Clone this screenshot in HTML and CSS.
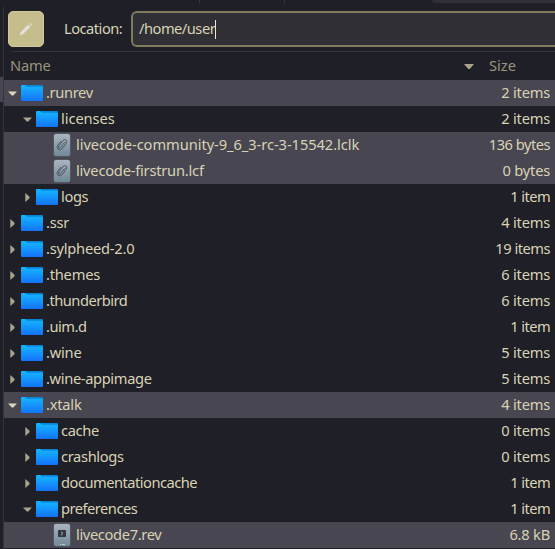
FILE: index.html
```
<!DOCTYPE html>
<html lang="en">
<head>
<meta charset="utf-8">
<title>Files</title>
<link rel="stylesheet" href="styles.css">
</head>
<body>
<svg class="defs" aria-hidden="true">
  <defs>
    <linearGradient id="blue" x1="0" y1="0" x2="0" y2="1"><stop offset="0" stop-color="#14b8ff"/><stop offset="1" stop-color="#1473fa"/></linearGradient>
    <linearGradient id="steel" x1="0" y1="0" x2="0" y2="1"><stop offset="0" stop-color="#aab4bf"/><stop offset="1" stop-color="#718998"/></linearGradient>
    <symbol id="folder" viewBox="0 0 22 16"><path d="M5 0H21.2Q22 0 22 1V8H0V1Z" fill="#0784d5"/><path d="M0 1Q0 0 1 0H4L6 1.8H21.2Q22 1.8 22 2.6V15Q22 16 21 16H1Q0 16 0 15Z" fill="url(#blue)"/></symbol>
    <symbol id="clip" viewBox="0 0 18 24"><rect x=".5" y=".5" width="17" height="23" rx="2.5" fill="#586875"/><rect x="1" y="1" width="16" height="22" rx="2" fill="url(#steel)"/><path d="M11.7 9.2L7.7 14.6Q6.8 15.6 5.9 15Q5 14.2 5.8 13L10 7.5Q11.4 5.9 13 7Q14.5 8.2 13.3 10L9.5 15.3Q7.5 17.8 5.1 16.3Q3.2 14.6 4.7 12.3L8 8" fill="none" stroke="#4b5863" stroke-width="1"/></symbol>
    <symbol id="rev" viewBox="0 0 18 24"><rect x=".5" y=".5" width="17" height="23" rx="2.5" fill="#586875"/><rect x="1" y="1" width="16" height="22" rx="2" fill="url(#steel)"/><rect x="5" y="7" width="8" height="7" rx=".7" fill="#303940"/><path d="M8 8.8L10 10.5L8 12.2" fill="none" stroke="#a8b5bf"/><path d="M7 21.5h1m1 0h3" stroke="#c1ccd3" stroke-width="1.2"/></symbol>
    <symbol id="open" viewBox="0 0 9 9"><path d="M0 2.5H9L5.2 6.5H3.8Z"/></symbol>
    <symbol id="closed" viewBox="0 0 9 9"><path d="M2.3 0L6.5 3.8V5.2L2.3 9Z"/></symbol>
  </defs>
</svg>
<div class="edge"><div class="edge-selection"></div></div>
<main class="window">
  <div class="tabs"><i></i><i></i><b></b></div>
  <div class="toolbar">
    <button class="edit" aria-label="Edit location"><svg width="14" height="14" viewBox="0 0 14 14"><path d="M1 13L1.5 10.3L9 2.8L11.2 5L3.7 12.5Z" fill="#e3e1dc"/><path d="M9.7 2.1L10.8 1Q11.4.5 12.2 1.2L12.8 1.8Q13.5 2.5 12.9 3.2L11.9 4.3Z" fill="#d8d1b4"/></svg></button>
    <span class="label tighter">Location:</span>
    <div class="location"><span class="tighter">/home/user</span><i class="caret"></i></div>
  </div>
  <div class="header"><span class="name snug">Name</span><svg class="sort" viewBox="0 0 10 5"><path d="M0 0H10L5.7 5H4.3Z"/></svg><span class="size">Size</span></div>
  <div class="list">
    <div class="row selected"><svg class="arrow"><use href="#open"/></svg><svg class="folder"><use href="#folder"/></svg><span class="name tight">.runrev</span><span class="size snug">2 items</span></div>
    <div class="row nested"><svg class="arrow"><use href="#open"/></svg><svg class="folder"><use href="#folder"/></svg><span class="name slight">licenses</span><span class="size snug">2 items</span></div>
    <div class="row selected file"><svg class="doc"><use href="#clip"/></svg><span class="name slight">livecode-community-9_6_3-rc-3-15542.lclk</span><span class="size tighter">136 bytes</span></div>
    <div class="row selected file"><svg class="doc"><use href="#clip"/></svg><span class="name snug">livecode-firstrun.lcf</span><span class="size snug">0 bytes</span></div>
    <div class="row nested"><svg class="arrow"><use href="#closed"/></svg><svg class="folder"><use href="#folder"/></svg><span class="name tight">logs</span><span class="size tightest">1 item</span></div>
    <div class="row"><svg class="arrow"><use href="#closed"/></svg><svg class="folder"><use href="#folder"/></svg><span class="name snug">.ssr</span><span class="size snug">4 items</span></div>
    <div class="row"><svg class="arrow"><use href="#closed"/></svg><svg class="folder"><use href="#folder"/></svg><span class="name snug">.sylpheed-2.0</span><span class="size tighter">19 items</span></div>
    <div class="row"><svg class="arrow"><use href="#closed"/></svg><svg class="folder"><use href="#folder"/></svg><span class="name snug">.themes</span><span class="size snug">6 items</span></div>
    <div class="row"><svg class="arrow"><use href="#closed"/></svg><svg class="folder"><use href="#folder"/></svg><span class="name tighter">.thunderbird</span><span class="size snug">6 items</span></div>
    <div class="row"><svg class="arrow"><use href="#closed"/></svg><svg class="folder"><use href="#folder"/></svg><span class="name tighter">.uim.d</span><span class="size tightest">1 item</span></div>
    <div class="row"><svg class="arrow"><use href="#closed"/></svg><svg class="folder"><use href="#folder"/></svg><span class="name snug">.wine</span><span class="size snug">5 items</span></div>
    <div class="row"><svg class="arrow"><use href="#closed"/></svg><svg class="folder"><use href="#folder"/></svg><span class="name tight">.wine-appimage</span><span class="size snug">5 items</span></div>
    <div class="row selected"><svg class="arrow"><use href="#open"/></svg><svg class="folder"><use href="#folder"/></svg><span class="name snug">.xtalk</span><span class="size snug">4 items</span></div>
    <div class="row nested"><svg class="arrow"><use href="#closed"/></svg><svg class="folder"><use href="#folder"/></svg><span class="name tight">cache</span><span class="size snug">0 items</span></div>
    <div class="row nested"><svg class="arrow"><use href="#closed"/></svg><svg class="folder"><use href="#folder"/></svg><span class="name tight">crashlogs</span><span class="size snug">0 items</span></div>
    <div class="row nested"><svg class="arrow"><use href="#closed"/></svg><svg class="folder"><use href="#folder"/></svg><span class="name tighter">documentationcache</span><span class="size tightest">1 item</span></div>
    <div class="row nested"><svg class="arrow"><use href="#open"/></svg><svg class="folder"><use href="#folder"/></svg><span class="name tighter">preferences</span><span class="size tightest">1 item</span></div>
    <div class="row selected file"><svg class="doc"><use href="#rev"/></svg><span class="name tight">livecode7.rev</span><span class="size snug">6.8 kB</span></div>
  </div>
</main>
</body>
</html>
```
FILE: styles.css
```
* { box-sizing: border-box; }
body { margin: 0; width: 555px; height: 549px; overflow: hidden; display: flex; background: #1f1f27; color: #d9d3b6; font: 14.67px/26px "Noto Sans", sans-serif; }
.defs { position: absolute; width: 0; height: 0; }
.edge { width: 4px; height: 542px; margin-top: 7px; padding-top: 70px; border-right: 1px solid #35353d; flex: none; }
.edge-selection { height: 25px; background: #484650; }
.window { flex: 1; min-width: 0; }
.tabs { height: 11px; display: flex; align-items: flex-start; padding-left: 195px; }
.tabs i { width: 85px; height: 3px; border-left: 1px solid #35353a; }
.tabs b { margin-left: 63px; flex: 1; height: 3px; background: #302f35; border-bottom-left-radius: 4px; }
.toolbar { height: 41px; margin-left: 8px; display: flex; align-items: flex-start; border-bottom: 1px solid #34343a; }
.edit { width: 36px; height: 36px; margin-left: -4px; padding: 0; border: 1px solid #d1c999; border-radius: 5px; background: #c6bd8c; display: grid; place-items: center; flex: none; }
.label { margin-left: 20px; line-height: 35px; width: 67px; white-space: nowrap; }
.location { height: 36px; flex: 1; border: 2px solid #807b5f; border-right: 0; border-radius: 6px 0 0 6px; background: #302f35; display: flex; align-items: center; padding-left: 6px; line-height: 31px; }
.location span { padding-bottom: 1px; }
.caret { width: 1px; height: 19px; background: #eee6c8; }
.header { height: 28px; display: flex; align-items: center; padding: 0 0 0 6px; color: #99947e; line-height: 26px; }
.header span { padding-bottom: 2px; }
.header .name { width: 454px; }
.sort { width: 10px; height: 5px; fill: #aaa48d; }
.header .size { margin-left: 15px; }
.row { height: 26px; display: flex; align-items: center; padding: 0 5px 0 4px; white-space: nowrap; line-height: 24px; }
.row span { padding-bottom: 2px; }
.nested { padding-left: 19px; }
.file { padding-left: 49px; }
.selected { background: #484650; }
.arrow { width: 9px; height: 9px; margin-top: 1px; fill: #aaa48d; flex: none; }
.selected .arrow { fill: #ddd7ba; }
.folder { width: 22px; height: 16px; margin: 0 3px 0 4px; flex: none; }
.doc { width: 18px; height: 24px; margin-right: 5px; flex: none; }
.row .size { margin-left: auto; }
.slight { letter-spacing: -.06px; }
.snug { letter-spacing: -.22px; }
.tight { letter-spacing: -.35px; }
.tighter { letter-spacing: -.5px; }
.tightest { letter-spacing: -.6px; }
```
